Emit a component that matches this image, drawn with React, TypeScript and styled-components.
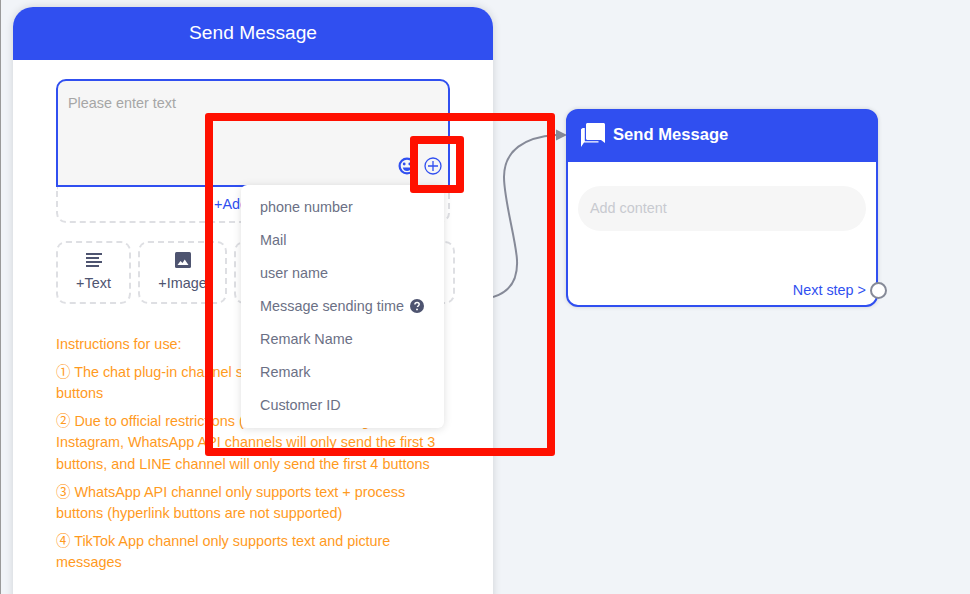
import React from "react"
import styled, { createGlobalStyle } from "styled-components"

const BLUE = "#304ff0"

const GlobalStyle = createGlobalStyle`
  html, body {
    margin: 0;
    padding: 0;
    background: #f1f4f8;
  }
  * {
    box-sizing: border-box;
  }
`

const Page = styled.div`
  position: relative;
  display: flex;
  width: 970px;
  height: 594px;
  overflow: hidden;
  padding-left: 12px;
  border-left: 1px solid #9a9a9a;
  background: #f1f4f8;
  font-family: "Liberation Sans", Arial, "Noto Sans CJK SC", sans-serif;
  font-size: 14.4px;
`

const Panel = styled.section`
  position: relative;
  z-index: 1;
  flex: 0 0 480px;
  min-width: 0;
  margin-top: 7px;
  height: 640px;
  background: #fff;
  border-radius: 20px 20px 0 0;
  box-shadow: 0 0 8px rgba(0, 0, 0, 0.14);
`

const PanelHeader = styled.header`
  display: flex;
  align-items: center;
  justify-content: center;
  height: 53px;
  padding-bottom: 2px;
  background: ${BLUE};
  border-radius: 20px 20px 0 0;
  color: #fff;
  font-size: 19.2px;
`

const PanelBody = styled.div`
  padding: 19px 43px 0;
`

const Editor = styled.div`
  position: relative;
  height: 108px;
  padding: 14px 10px;
  background: #f6f6f6;
  border: 2px solid ${BLUE};
  border-radius: 10px 10px 0 0;
  color: #a6a6a6;
  line-height: 16px;
`

const EditorIcons = styled.div`
  position: absolute;
  right: 6px;
  bottom: 10px;
  display: flex;
  align-items: center;
  gap: 8px;
`

const AddButton = styled.div`
  display: flex;
  align-items: center;
  justify-content: center;
  height: 36px;
  border: 2px dashed #dedfe3;
  border-top: 0;
  border-radius: 0 0 10px 10px;
  color: ${BLUE};
`

const ToolRow = styled.div`
  display: flex;
  gap: 7px;
  width: 399px;
  margin-top: 18px;
`

const ToolItem = styled.div<{ $width?: number }>`
  display: flex;
  flex-direction: column;
  align-items: center;
  flex: ${({ $width }) => ($width ? `0 0 ${$width}px` : "1")};
  height: 63px;
  padding-top: 9px;
  gap: 7px;
  border: 2px dashed #dedfe3;
  border-radius: 10px;
  color: #4e5470;
`

const Instructions = styled.div`
  margin-top: 30px;
  color: #ff9a1e;
  line-height: 21.6px;
`

const Note = styled.p`
  margin: 0 0 6px;
`

const Menu = styled.ul`
  position: absolute;
  z-index: 2;
  top: 100%;
  right: 4px;
  width: 203px;
  margin: 0;
  padding: 5px 0 7px;
  list-style: none;
  background: #fff;
  border-radius: 6px;
  box-shadow: 0 1px 8px rgba(0, 0, 0, 0.13);
`

const MenuItem = styled.li`
  display: flex;
  align-items: center;
  gap: 6px;
  height: 33px;
  padding-left: 19px;
  color: #6b7085;
`

const Canvas = styled.main`
  position: relative;
  flex: 1;
`

const Wire = styled.svg`
  position: absolute;
  left: 0;
  top: 0;
`

const Node = styled.article`
  position: absolute;
  left: 73px;
  top: 109px;
  width: 312px;
  height: 198px;
  background: #fff;
  border: 2px solid ${BLUE};
  border-radius: 12px;
  box-shadow: 0 0 4px rgba(0, 0, 0, 0.15);
`

const NodeHeader = styled.header`
  display: flex;
  align-items: center;
  gap: 8px;
  height: 52px;
  margin: -1px -1px 0;
  padding: 0 0 2px 13px;
  background: ${BLUE};
  border-radius: 11px 11px 0 0;
  color: #fff;
  font-size: 16.6px;
  font-weight: 700;
`

const NodeBody = styled.div`
  padding: 24px 10px 0;
`

const ContentPill = styled.div`
  display: flex;
  align-items: center;
  height: 45px;
  padding: 0 0 2px 12px;
  background: #f6f6f6;
  border-radius: 23px;
  color: #c8cad0;
`

const NextStep = styled.div`
  position: absolute;
  right: 10px;
  bottom: 7px;
  color: ${BLUE};
  line-height: 16px;
`

const Port = styled.span`
  position: absolute;
  right: -11px;
  bottom: 6px;
  width: 17px;
  height: 17px;
  background: #fff;
  border: 2.5px solid #868a98;
  border-radius: 50%;
`

const Annotation = styled.div<{ $x: number; $y: number; $w: number; $h: number }>`
  position: absolute;
  z-index: 3;
  left: ${({ $x }) => $x}px;
  top: ${({ $y }) => $y}px;
  width: ${({ $w }) => $w}px;
  height: ${({ $h }) => $h}px;
  border: 8px solid #ff1000;
  border-radius: 3px;
`

const SmileIcon = () => (
  <svg width="18" height="18" viewBox="0 0 18 18">
    <circle cx="9" cy="9" r="7.4" fill="none" stroke={BLUE} strokeWidth="2.2" />
    <circle cx="6.2" cy="7" r="1.4" fill={BLUE} />
    <circle cx="11.8" cy="7" r="1.4" fill={BLUE} />
    <path d="M4.8 10.4h8.4c-.4 2.3-2.1 3.6-4.2 3.6s-3.8-1.3-4.2-3.6z" fill={BLUE} />
  </svg>
)

const PlusCircleIcon = () => (
  <svg width="18" height="18" viewBox="0 0 18 18" fill="none" stroke={BLUE} strokeWidth="1.3">
    <circle cx="9" cy="9" r="8" />
    <path d="M9 4v10M4 9h10" />
  </svg>
)

const TextIcon = () => (
  <svg width="16" height="16" viewBox="0 0 16 16" fill="#4e5470">
    <rect x="0" y="1" width="16" height="2" />
    <rect x="0" y="5" width="13" height="2" />
    <rect x="0" y="9" width="16" height="2" />
    <rect x="0" y="13" width="13" height="2" />
  </svg>
)

const ImageIcon = () => (
  <svg width="16" height="16" viewBox="0 0 16 16">
    <rect width="16" height="16" rx="1.5" fill="#4e5470" />
    <path d="M2.5 13l3-4 2 2 2.2-3.4 3.8 5.4z" fill="#fff" />
  </svg>
)

const HelpIcon = () => (
  <svg width="14" height="14" viewBox="0 0 14 14">
    <circle cx="7" cy="7" r="7" fill="#4e5470" />
    <path
      d="M4.9 5.4c0-1.300 1-2 2.200-2s2.100.7 2.100 1.800c0 1.500-1.700 1.500-1.700 2.900"
      fill="none"
      stroke="#fff"
      strokeWidth="1.500"
    />
    <circle cx="7" cy="10.400" r="0.950" fill="#fff" />
  </svg>
)

const ChatIcon = () => (
  <svg width="25" height="25" viewBox="0 0 25 25" fill="#fff">
    <path d="M6 1.500C6 .7 6.700 0 7.500 0h16c.8 0 1.500.7 1.500 1.500V20l-4-3H7.500C6.700 17 6 16.300 6 15.500z" />
    <path d="M3.500 5H4.800v13.200H18.500V19.500H4L1 24V6.500C1 5.700 2.700 5 3.500 5z" />
  </svg>
)

const menuItems = ["phone number", "Mail", "user name", "Message sending time", "Remark Name", "Remark", "Customer ID"]

const App: React.FC = () => (
  <Page>
    <GlobalStyle />
    <Panel>
      <PanelHeader>Send Message</PanelHeader>
      <PanelBody>
        <Editor>
          Please enter text
          <EditorIcons>
            <SmileIcon />
            <PlusCircleIcon />
          </EditorIcons>
          <Menu>
            {menuItems.map((item) => (
              <MenuItem key={item}>
                {item}
                {item === "Message sending time" && <HelpIcon />}
              </MenuItem>
            ))}
          </Menu>
        </Editor>
        <AddButton>+Add button</AddButton>
        <ToolRow>
          <ToolItem $width={75}>
            <TextIcon />
            +Text
          </ToolItem>
          <ToolItem $width={89}>
            <ImageIcon />
            +Image
          </ToolItem>
          <ToolItem />
        </ToolRow>
        <Instructions>
          <Note>Instructions for use:</Note>
          <Note>① The chat plug-in channel supports up to 10 process buttons</Note>
          <Note>
            ② Due to official restrictions (Facebook Messenger, Instagram, WhatsApp API channels will only send the
            first 3 buttons, and LINE channel will only send the first 4 buttons
          </Note>
          <Note>③ WhatsApp API channel only supports text + process buttons (hyperlink buttons are not supported)</Note>
          <Note>④ TikTok App channel only supports text and picture messages</Note>
        </Instructions>
      </PanelBody>
    </Panel>
    <Canvas>
      <Wire width="80" height="320" viewBox="0 0 80 320" fill="none">
        <path
          d="M0 297C17 292 25 280 24 260C23 240 11 200 11 177C11 150 32 137 63 135"
          stroke="#868a98"
          strokeWidth="2"
        />
        <path d="M63 129.500L74 135L63 140.500z" fill="#868a98" />
      </Wire>
      <Node>
        <NodeHeader>
          <ChatIcon />
          Send Message
        </NodeHeader>
        <NodeBody>
          <ContentPill>Add content</ContentPill>
        </NodeBody>
        <NextStep>Next step &gt;</NextStep>
        <Port />
      </Node>
    </Canvas>
    <Annotation $x={204} $y={113} $w={350} $h={343} />
    <Annotation $x={409} $y={136} $w={54} $h={57} />
  </Page>
)

export default App
